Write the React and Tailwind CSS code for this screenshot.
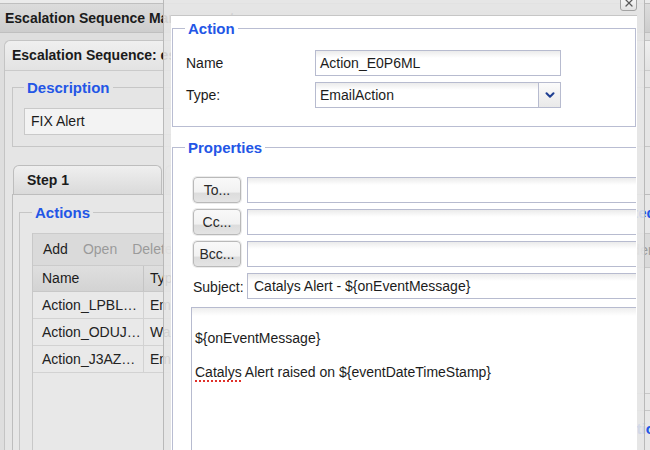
import React from 'react';
import { X, ChevronDown } from 'lucide-react';

const legendCls = 'px-[3px] text-[15px] leading-[17px] font-bold text-[#2356e6]';
const fieldCls =
  'h-[26px] border border-[#b7bbcf] bg-[linear-gradient(#ebebeb,#ffffff_7px)] pl-[4px] flex items-center text-[14px] text-[#1c1c1c]';
const btnCls =
  'w-[48px] h-[26px] shrink-0 rounded-[4px] border border-[#b9b9b9] bg-[linear-gradient(#f9f9f9_0%,#f1f1f1_60%,#dcdcdc_61%,#e4e4e4_100%)] shadow-[0_0_0_1px_#ececec] flex items-center justify-center text-[14px] text-[#2a2a2a]';

const actions = [
  { name: 'Action_LPBL…', type: 'EmailAction' },
  { name: 'Action_ODUJ…', type: 'WaitAction' },
  { name: 'Action_J3AZ…', type: 'EmailAction' }
];

const GridRow = ({ name, type }) => (
  <div className="flex h-[27px] border-b border-[#d2d2d2] bg-[#e9e9e9] text-[14px] text-[#222]">
    <div className="w-[111px] shrink-0 border-r border-[#d2d2d2] pl-[9px] flex items-center whitespace-nowrap overflow-hidden">
      {name}
    </div>
    <div className="pl-[6px] flex items-center whitespace-nowrap">{type}</div>
  </div>
);

const App = () => {
  return (
    <div className="relative w-[650px] h-[450px] overflow-hidden bg-[#dedede] font-['Liberation_Sans',Arial,sans-serif] text-[#1b1b1b]">
      {/* Background window */}
      <div className="w-[740px]">
        <div className="h-[3px] bg-[#ebebeb]" />
        <div className="h-[30px] border-y border-[#bfbfbf] bg-gradient-to-b from-[#dcdcdc] to-[#cdcdcd] px-[5px] flex items-center text-[14px] font-bold">
          Escalation Sequence Management
        </div>

        <div className="pl-[4px] pt-[7px]">
          <div className="rounded-tl-[6px] border-l border-t border-[#c4c4c4] bg-[#e5e5e5]">
            <div className="h-[30px] rounded-tl-[6px] border-b border-[#cacaca] bg-gradient-to-b from-[#efefef] to-[#e3e3e3] px-[7px] flex items-center text-[14px] font-bold">
              Escalation Sequence: escalation_seq_1
            </div>

            <div className="pl-[7px] pt-[8px]">
              {/* Description */}
              <fieldset className="w-[660px] border border-[#c6c6c6] px-[11px] pt-[12px] pb-[11px]">
                <legend className={legendCls}>Description</legend>
                <div className="h-[27px] w-[400px] border border-[#c9c9c9] bg-[#f3f3f3] pl-[6px] flex items-center text-[14px]">
                  FIX Alert
                </div>
              </fieldset>

              {/* Tabs */}
              <div className="mt-[18px] flex">
                <div className="ml-[1px] w-[149px] h-[29px] rounded-t-[6px] border border-b-0 border-[#bdbdbd] bg-gradient-to-b from-[#efefef] to-[#dadada] pl-[13px] flex items-center text-[14px] font-bold">
                  Step 1
                </div>
                <div className="ml-[3px] w-[149px] h-[29px] rounded-t-[6px] border border-b-0 border-[#c4c4c4] bg-gradient-to-b from-[#e6e6e6] to-[#d6d6d6] pl-[13px] flex items-center text-[14px] font-bold text-[#555]">
                  Step 2
                </div>
              </div>

              <div className="h-[300px] border-l border-t border-[#bdbdbd] bg-[#e7e7e7] pl-[6px] pt-[9px] flex items-start gap-[8px]">
                {/* Actions */}
                <fieldset className="w-[551px] h-[260px] border border-[#c6c6c6] px-[12px] pt-[12px]">
                  <legend className={legendCls}>Actions</legend>
                  <div className="border-l border-[#c8c8c8]">
                    <div className="h-[33px] border-y border-[#cbcbcb] bg-[#dadada] pl-[10px] flex items-center gap-[15px] text-[14px]">
                      <span className="text-[#1e1e1e]">Add</span>
                      <span className="text-[#9a9a9a]">Open</span>
                      <span className="text-[#9a9a9a]">Delete</span>
                    </div>
                    <div className="flex h-[26px] border-b border-[#c8c8c8] bg-gradient-to-b from-[#dfdfdf] to-[#d3d3d3] text-[14px]">
                      <div className="w-[111px] border-r border-[#c4c4c4] pl-[9px] flex items-center">Name</div>
                      <div className="pl-[6px] flex items-center">Type</div>
                    </div>
                    {actions.map(a => (
                      <GridRow key={a.name} name={a.name} type={a.type} />
                    ))}
                    <div className="h-[120px] bg-[#e8e8e8]" />
                  </div>
                </fieldset>

                {/* Right column, mostly hidden */}
                <div className="flex flex-col">
                  <fieldset className="w-[150px] border border-[#c6c6c6] px-[12px] pt-[12px] pb-[16px]">
                    <legend className={legendCls}>Selected</legend>
                    <div className="border border-[#c8c8c8]">
                      <div className="h-[33px] bg-[#dadada] pl-[10px] flex items-center text-[14px] text-[#9a9a9a]">
                        Reorder
                      </div>
                      <div className="h-[126px] border-t border-[#c8c8c8] bg-[#e8e8e8]" />
                    </div>
                  </fieldset>
                  <fieldset className="mt-[9px] w-[150px] h-[60px] border border-[#c6c6c6] px-[12px]">
                    <legend className={legendCls}>Conditions</legend>
                  </fieldset>
                </div>
              </div>
            </div>
          </div>
        </div>
      </div>

      {/* Modal dialog */}
      <div className="absolute left-[163px] top-[-14px] w-[482px] h-[480px] border-x border-[#b9b9b9] bg-[#e5e5e5]/90 pl-[7px] pr-[7px] pt-[29px]">
        <div className="absolute right-[7px] top-[8px] w-[17px] h-[17px] rounded-[3px] border border-[#a3a3a3] bg-gradient-to-b from-[#ffffff] to-[#e2e2e2] flex items-center justify-center">
          <X size={12} strokeWidth={2.5} className="text-[#5a5a5a]" />
        </div>

        <div className="h-[460px] border-t border-[#c6c6c6] bg-white px-[1px]">
          <div className="h-full overflow-hidden">
            {/* Action */}
            <fieldset className="mt-[4px] w-[464px] border border-[#b9bdd2] px-[12px] pt-[13px] pb-[18px]">
              <legend className={legendCls}>Action</legend>
              <div className="flex h-[26px] items-center text-[14px]">
                <div className="w-[130px] pl-[1px]">Name</div>
                <div className={`${fieldCls} w-[246px]`}>Action_E0P6ML</div>
              </div>
              <div className="mt-[6px] flex h-[26px] items-center text-[14px]">
                <div className="w-[130px] pl-[1px]">Type:</div>
                <div className={`${fieldCls} w-[246px] pr-0 justify-between`}>
                  <span>EmailAction</span>
                  <span className="h-full w-[22px] border-l border-[#b7bbcf] bg-gradient-to-b from-[#fbfbfb] to-[#e9e9e9] flex items-center justify-center">
                    <ChevronDown size={14} strokeWidth={3.5} className="text-[#1f3f92]" />
                  </span>
                </div>
              </div>
            </fieldset>

            {/* Properties */}
            <fieldset className="mt-[12px] w-[520px] h-[340px] border border-[#b9bdd2] px-[12px] pt-[21px]">
              <legend className={legendCls}>Properties</legend>
              <div className="flex flex-col gap-[6px] pl-[8px]">
                {['To...', 'Cc...', 'Bcc...'].map(label => (
                  <div key={label} className="flex gap-[6px]">
                    <div className={btnCls}>{label}</div>
                    <div className={`${fieldCls} flex-1`} />
                  </div>
                ))}
                <div className="flex h-[26px]">
                  <div className="w-[54px] shrink-0 flex items-end pb-[1px] text-[14px]">Subject:</div>
                  <div className={`${fieldCls} flex-1 pl-[6px]`}>Catalys Alert - ${'{'}onEventMessage{'}'}</div>
                </div>
              </div>
              <div className="mt-[8px] ml-[6px] h-[200px] border border-[#b7bbcf] bg-[linear-gradient(#eeeeee,#ffffff_8px)] pl-[3px] pt-[22px] text-[14px] leading-[17px] text-[#1c1c1c]">
                <div>${'{'}onEventMessage{'}'}</div>
                <div className="h-[17px]" />
                <div>
                  <span className="underline decoration-dotted decoration-[#e0302a] decoration-2 underline-offset-[3px]">
                    Catalys
                  </span>{' '}
                  Alert raised on ${'{'}eventDateTimeStamp{'}'}
                </div>
              </div>
            </fieldset>
          </div>
        </div>
      </div>
    </div>
  );
};

export default App;
